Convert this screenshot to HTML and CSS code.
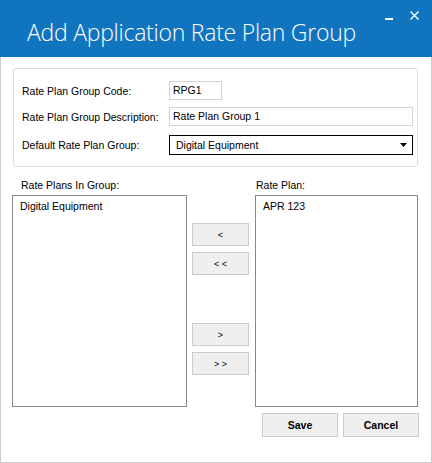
FILE: index.html
```html
<!DOCTYPE html>
<html>
<head>
<meta charset="utf-8">
<link rel="stylesheet" href="styles.css">
</head>
<body>
<div class="window">
  <div class="titlebar">
    <div class="title">Add Application Rate Plan Group</div>
    <div class="controls">
      <span class="min"></span>
      <svg class="close" width="9" height="9" viewBox="0 0 9 9"><path d="M0.5 0.5L8.5 8.5M8.5 0.5L0.5 8.5" stroke="#fff" stroke-width="1.4"/></svg>
    </div>
  </div>
  <div class="content">
    <div class="groupbox">
      <div class="row">
        <span class="label">Rate Plan Group Code:</span>
        <div class="input code">RPG1</div>
      </div>
      <div class="row">
        <span class="label">Rate Plan Group Description:</span>
        <div class="input wide">Rate Plan Group 1</div>
      </div>
      <div class="row">
        <span class="label">Default Rate Plan Group:</span>
        <div class="select">
          <span>Digital Equipment</span>
          <svg class="arrow" width="7" height="4" viewBox="0 0 7 4"><path d="M0 0H7L3.5 4Z" fill="#000"/></svg>
        </div>
      </div>
    </div>
    <div class="lists">
      <div class="col left">
        <div class="listlabel">Rate Plans In Group:</div>
        <div class="listbox lb-left"><div class="item">Digital Equipment</div></div>
      </div>
      <div class="movers">
        <button class="mv">&lt;</button>
        <button class="mv">&lt; &lt;</button>
        <button class="mv gap">&gt;</button>
        <button class="mv">&gt; &gt;</button>
      </div>
      <div class="col right">
        <div class="listlabel">Rate Plan:</div>
        <div class="listbox lb-right"><div class="item">APR 123</div></div>
      </div>
    </div>
    <div class="actions">
      <button class="btn">Save</button>
      <button class="btn">Cancel</button>
    </div>
  </div>
</div>
</body>
</html>
```
FILE: styles.css
```css
html, body {
  margin: 0;
  padding: 0;
  background: #fff;
}
.window {
  width: 432px;
  height: 463px;
  box-sizing: border-box;
  border: 1px solid #cccccc;
  border-top: none;
  font-family: "Liberation Sans", Arial, sans-serif;
  font-size: 10.5px;
  color: #000;
  display: flex;
  flex-direction: column;
}
.titlebar {
  height: 57px;
  background: #1174bf;
  margin: 0 -1px;
  display: flex;
  justify-content: space-between;
  align-items: flex-start;
}
.title {
  font-family: "Open Sans", "Noto Sans", sans-serif;
  font-weight: 300;
  font-size: 23px;
  letter-spacing: -0.25px;
  color: #fff;
  margin-left: 27px;
  margin-top: 16px;
  line-height: 32px;
}
.controls {
  display: flex;
  align-items: flex-start;
  margin-top: 11px;
  margin-right: 13px;
}
.min {
  width: 8px;
  height: 2px;
  background: #fff;
  margin-top: 7px;
  margin-right: 17px;
}
.close {
  display: block;
}
.content {
  padding: 11px 0 0 11px;
}
.groupbox {
  width: 405px;
  height: 99px;
  margin-left: 1px;
  box-sizing: border-box;
  border: 1px solid #dcdcdc;
  border-radius: 3px;
  padding: 12px 0 0 8px;
  display: flex;
  flex-direction: column;
  gap: 7px;
}
.row {
  display: flex;
  align-items: center;
  height: 19px;
}
.row:last-child {
  margin-top: 2px;
  height: 20px;
}
.label {
  width: 147px;
}
.input {
  height: 19px;
  box-sizing: border-box;
  border: 1px solid #d4d4d4;
  padding: 0 3px;
  line-height: 17px;
}
.code { width: 53px; }
.wide { width: 244px; }
.select {
  width: 244px;
  height: 20px;
  box-sizing: border-box;
  border: 1px solid #000;
  display: flex;
  align-items: center;
  justify-content: space-between;
  padding: 0 5px 0 6px;
}
.lists {
  display: flex;
  margin-top: 12px;
  height: 228px;
}
.col {
  display: flex;
  flex-direction: column;
}
.listlabel {
  height: 16px;
  padding-left: 9px;
}
.right .listlabel {
  padding-left: 1px;
}
.listbox {
  flex: 1;
  box-sizing: border-box;
  border: 1px solid #828790;
  padding: 4px 0 0 7px;
}
.lb-left { width: 175px; }
.lb-right { width: 163px; }
.movers {
  width: 57px;
  margin: 0 6px 0 5px;
  padding-top: 44px;
  display: flex;
  flex-direction: column;
  gap: 6px;
}
.mv, .btn {
  font-family: "Liberation Sans", Arial, sans-serif;
  background: #efefef;
  border: 1px solid #cccccc;
  box-sizing: border-box;
  padding: 0;
  margin: 0;
  color: #000;
}
.mv {
  height: 23px;
  width: 57px;
  font-size: 9px;
}
.mv.gap {
  margin-top: 42px;
}
.actions {
  display: flex;
  gap: 5px;
  margin-top: 6px;
  margin-left: 250px;
}
.btn {
  width: 76px;
  height: 24px;
  font-size: 10.5px;
  font-weight: bold;
}
```
